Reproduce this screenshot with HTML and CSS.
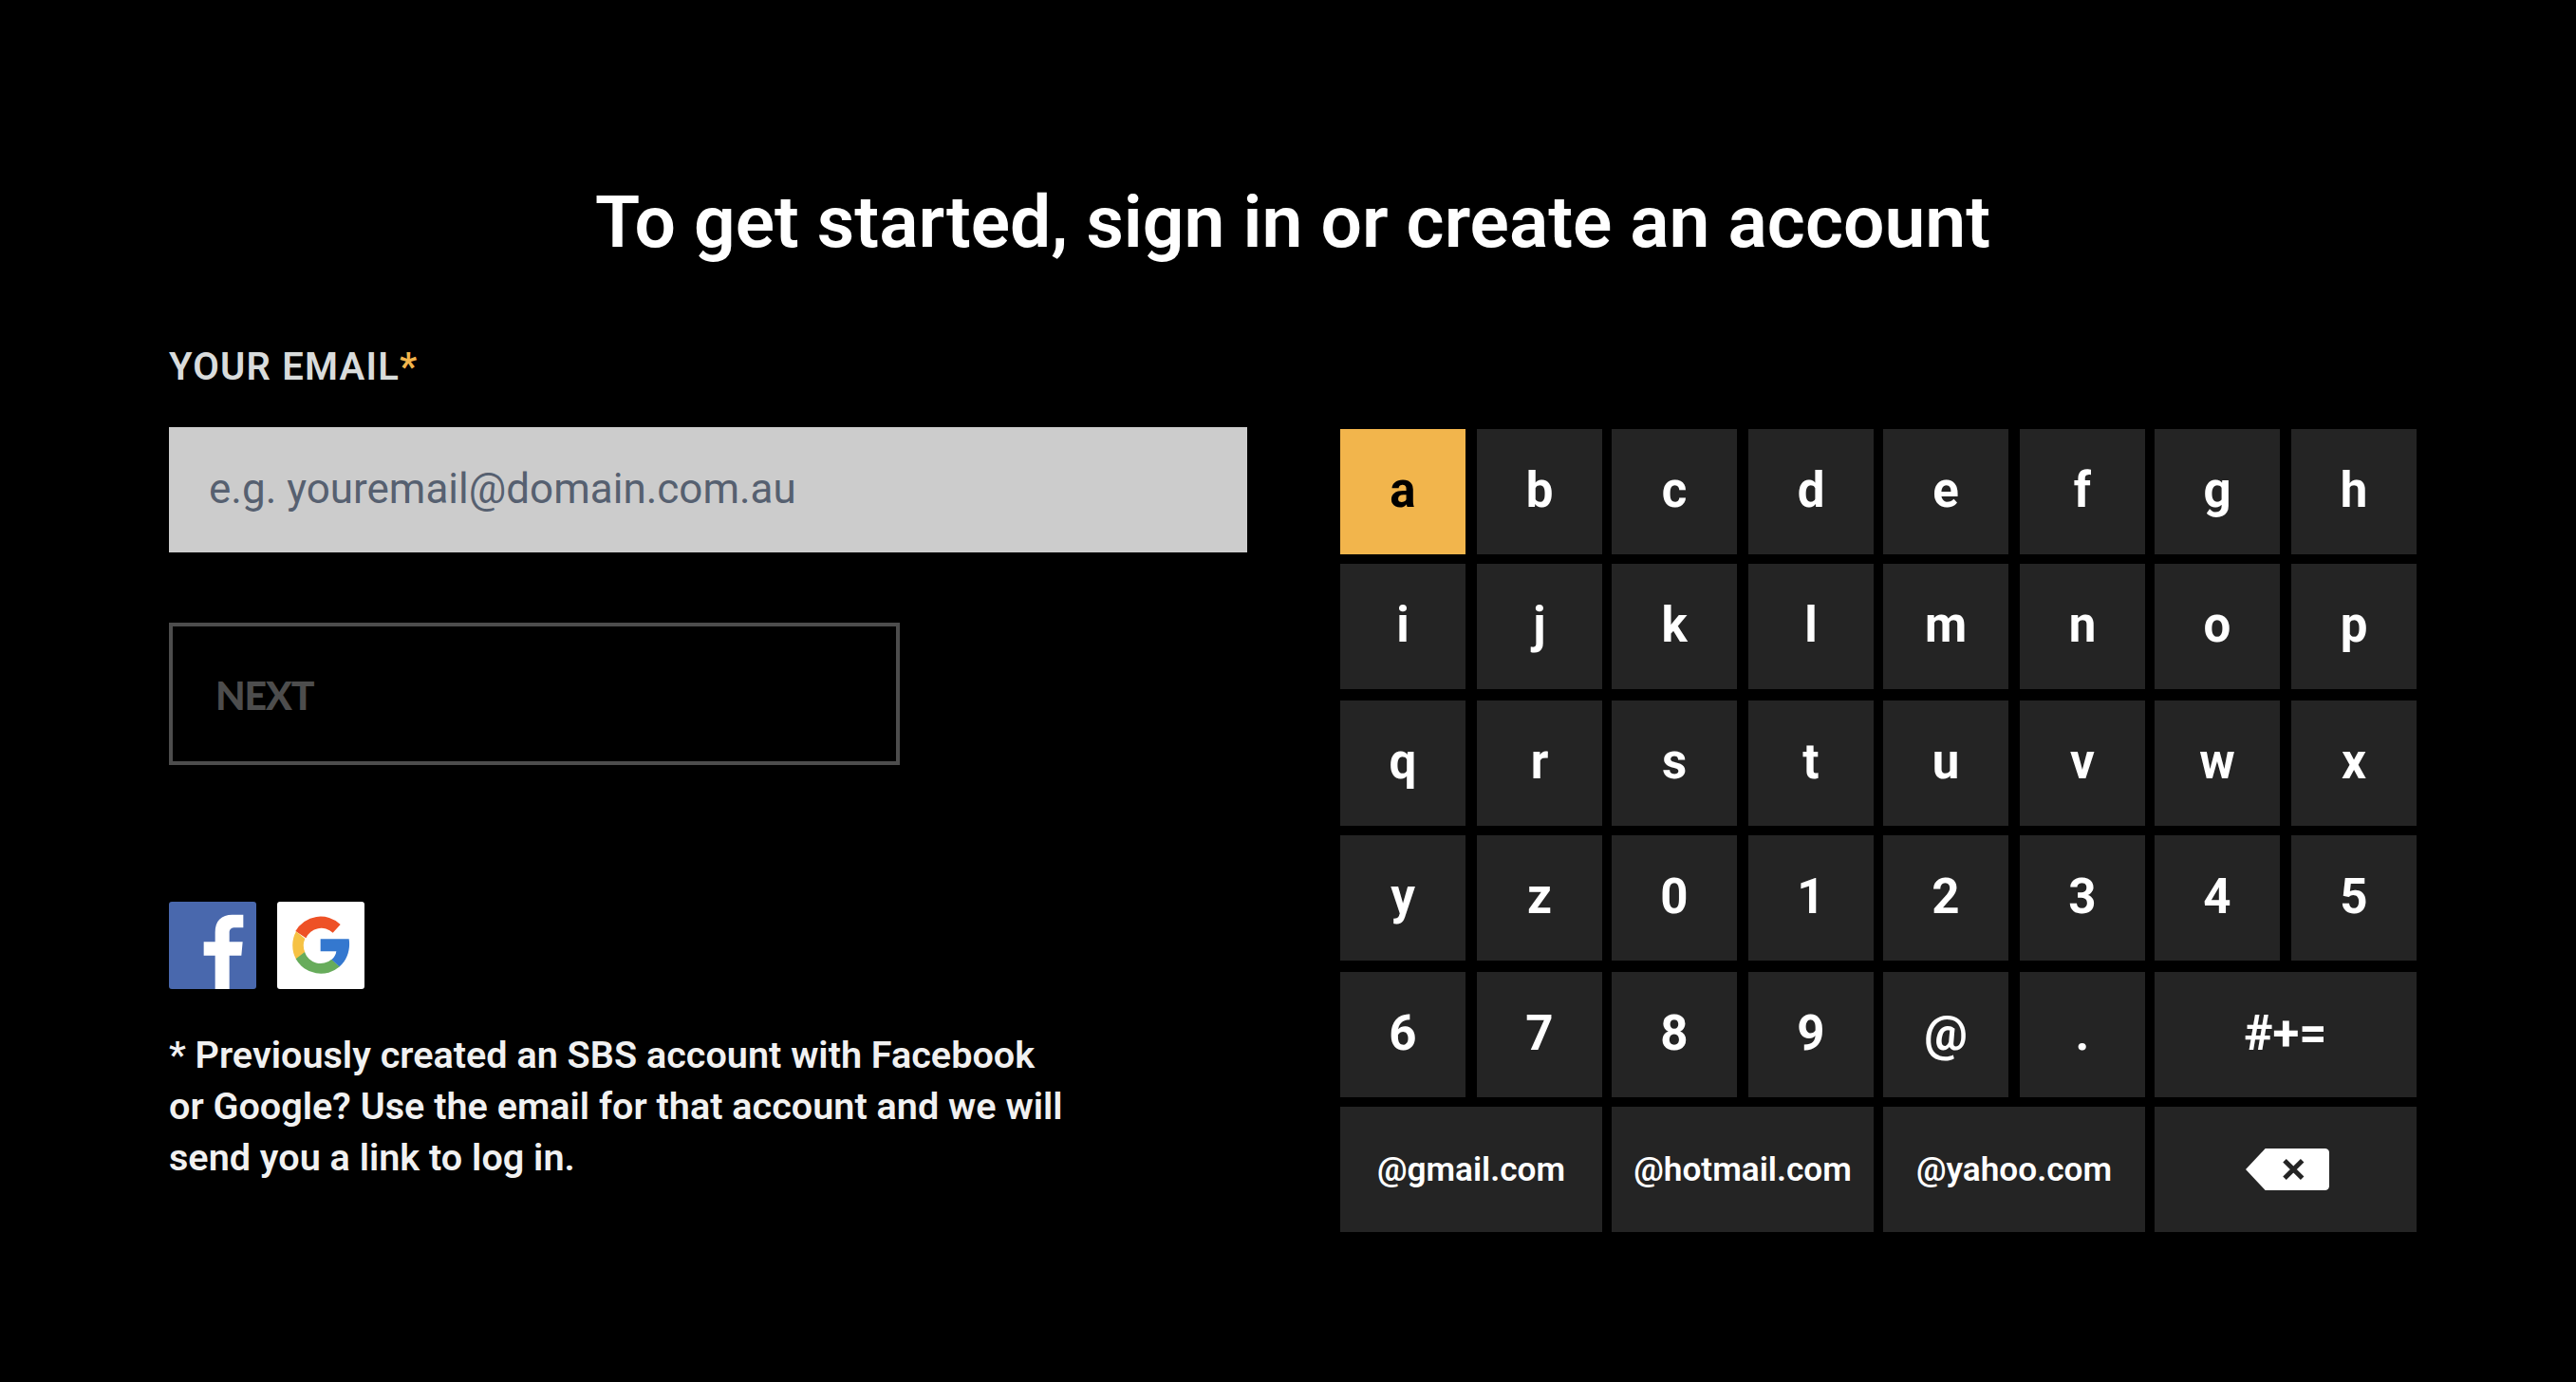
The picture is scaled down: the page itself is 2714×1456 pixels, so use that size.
FILE: index.html
```
<!DOCTYPE html>
<html lang="en">
<head>
    <meta charset="UTF-8">
    <meta name="viewport" content="width=device-width, initial-scale=1.0">
    <title>Sign in or create an account</title>
    <link rel="stylesheet" href="styles.css">
</head>
<body>
    <h1 class="title">To get started, sign in or create an account</h1>
    <div class="content">
        <form class="signin">
            <label class="label" for="email">YOUR EMAIL<span class="required">*</span></label>
            <input class="email" id="email" type="text" placeholder="e.g. youremail@domain.com.au">
            <button class="next" type="button" disabled>NEXT</button>

            <div class="socials">
                <svg class="social" viewBox="0 0 276 276">
                    <rect width="276" height="276" rx="9" fill="#4968ad"/>
                    <path fill="#fff" d="M146 276V170H110V127H146V97C146 60 166 41 200 41H235V82H210C196 82 191 88 191 99V127H233L229 170H191V276Z"/>
                </svg>
                <svg class="social" viewBox="0 0 276 276">
                    <rect width="276" height="276" rx="9" fill="#fff"/>
                    <path fill="#ee5126" d="M200 72A91 91 0 0 0 58 93L91 115A53 53 0 0 1 176 98Z"/>
                    <path fill="#f6c244" d="M60 94A91 91 0 0 0 60 182L88 160A53 53 0 0 1 88 117Z"/>
                    <path fill="#67ac5b" d="M59 181A91 91 0 0 0 198 205L172 182A53 53 0 0 1 87 159Z"/>
                    <path fill="#3478cf" d="M137 118H227C232 150 222 184 197 205L172 183C180 177 186 167 187 157H137Z"/>
                </svg>
            </div>
            <p class="note">* Previously created an SBS account with Facebook<br>or Google? Use the email for that account and we will<br>send you a link to log in.</p>
        </form>

        <div class="keyboard">
            <div class="key active">a</div>
            <div class="key">b</div>
            <div class="key">c</div>
            <div class="key">d</div>
            <div class="key">e</div>
            <div class="key">f</div>
            <div class="key">g</div>
            <div class="key">h</div>
            <div class="key">i</div>
            <div class="key">j</div>
            <div class="key">k</div>
            <div class="key">l</div>
            <div class="key">m</div>
            <div class="key">n</div>
            <div class="key">o</div>
            <div class="key">p</div>
            <div class="key">q</div>
            <div class="key">r</div>
            <div class="key">s</div>
            <div class="key">t</div>
            <div class="key">u</div>
            <div class="key">v</div>
            <div class="key">w</div>
            <div class="key">x</div>
            <div class="key">y</div>
            <div class="key">z</div>
            <div class="key">0</div>
            <div class="key">1</div>
            <div class="key">2</div>
            <div class="key">3</div>
            <div class="key">4</div>
            <div class="key">5</div>
            <div class="key">6</div>
            <div class="key">7</div>
            <div class="key">8</div>
            <div class="key">9</div>
            <div class="key">@</div>
            <div class="key">.</div>
            <div class="key wide">#+=</div>
            <div class="key wide domain">@gmail.com</div>
            <div class="key wide domain">@hotmail.com</div>
            <div class="key wide domain">@yahoo.com</div>
            <div class="key wide domain">
                <svg class="backspace" viewBox="0 0 264 132">
                    <path fill="#fff" d="M62 0H252Q264 2 264 14V118Q264 130 252 132H62L0 66Z"/>
                    <path stroke="#242424" stroke-width="15" d="M123 38L179 94M179 38L123 94"/>
                </svg>
            </div>
        </div>
    </div>
</body>
</html>
```
FILE: styles.css
```
* {
    box-sizing: border-box;
}
body {
    margin: 0;
    padding: 189px 168px 0 178px;
    background: #000;
    color: #fff;
    font-family: Roboto, sans-serif;
    font-weight: 600;
}
.title {
    margin: 0 0 84px;
    font-size: 76.8px;
    font-weight: 600;
    line-height: 90px;
    text-align: center;
}
.content {
    display: flex;
    justify-content: space-between;
}
.signin {
    display: flex;
    flex-direction: column;
    align-items: flex-start;
    width: 1136px;
}
.label {
    margin-bottom: 39px;
    color: #d9dcdc;
    font-size: 40px;
    line-height: 48px;
    letter-spacing: 1.2px;
}
.required {
    color: #f2b54c;
    font-weight: 700;
}
.email {
    width: 100%;
    height: 132px;
    padding: 0 42px 2px;
    border: 0;
    border-radius: 0;
    background: #ccc;
    color: #566070;
    font-family: Roboto, sans-serif;
    font-size: 44px;
}
.email::placeholder {
    color: #566070;
}
.next {
    width: 770px;
    height: 150px;
    margin-top: 74px;
    padding: 2px 45px 0;
    border: 4px solid #4d4d4d;
    background: #000;
    color: #4d4d4d;
    font-family: Lato, sans-serif;
    font-size: 41px;
    font-weight: 900;
    letter-spacing: -1.1px;
    text-align: left;
}
.socials {
    display: flex;
    gap: 22px;
    margin-top: 144px;
}
.social {
    display: block;
    width: 92px;
    height: 92px;
}
.note {
    margin: 43px 0 0;
    color: #f1f1f1;
    font-size: 39.6px;
    line-height: 54px;
}

/* on-screen keyboard */
.keyboard {
    display: grid;
    grid-template-columns: 144px 142px 144px 142px 144px 142px 144px 132px;
    grid-template-rows: 142px 144px 142px 144px 142px 132px;
    margin-top: 89px;
}
.key {
    display: flex;
    align-items: center;
    justify-content: center;
    width: 132px;
    height: 132px;
    padding-bottom: 3px;
    background: #242424;
    font-size: 51px;
    font-weight: 700;
}
.wide {
    grid-column: span 2;
    width: 276px;
}
.domain {
    padding-bottom: 0;
    font-size: 35.2px;
    font-weight: 600;
}
.active {
    background: #f2b54c;
    color: #000;
}
.backspace {
    width: 88px;
    height: 44px;
    margin-left: 4px;
}
```
